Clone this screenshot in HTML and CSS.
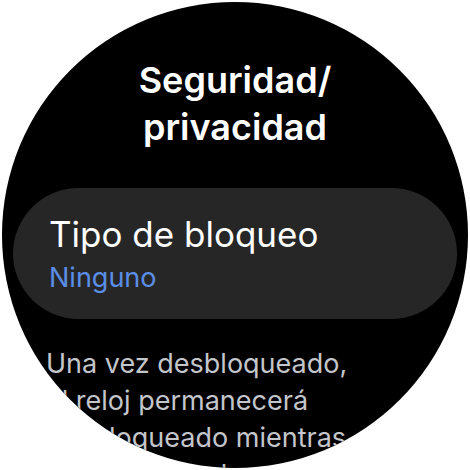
FILE: index.html
```html
<!DOCTYPE html>
<html lang="es">
<head>
<meta charset="utf-8">
<title>Seguridad/privacidad</title>
<link rel="stylesheet" href="styles.css">
</head>
<body>
<div class="watch">
  <h1 class="title">Seguridad/<br>privacidad</h1>
  <div class="card">
    <div class="card-title">Tipo de bloqueo</div>
    <div class="card-sub">Ninguno</div>
  </div>
  <p class="desc">Una vez desbloqueado, el reloj permanecerá desbloqueado mientras lo siga llevando puesto.</p>
</div>
</body>
</html>
```
FILE: styles.css
```css
html, body {
  margin: 0;
  padding: 0;
  background: #ffffff;
}
.watch {
  width: 466px;
  height: 466px;
  margin: 2px;
  border-radius: 50%;
  background: #000000;
  overflow: hidden;
  font-family: Inter, Roboto, sans-serif;
  padding-top: 55px;
  box-sizing: border-box;
}
.title {
  margin: 0;
  color: #ffffff;
  font-size: 36px;
  font-weight: 600;
  line-height: 47px;
  text-align: center;
}
.card {
  margin: 37px 11px 0 11px;
  height: 131px;
  box-sizing: border-box;
  padding: 26px 0 0 36px;
  border-radius: 66px;
  background: #262626;
}
.card-title {
  color: #ffffff;
  font-size: 35px;
  line-height: 40px;
}
.card-sub {
  margin-top: 8px;
  color: #5b8ee6;
  font-size: 27px;
  line-height: 32px;
}
.desc {
  margin: 26px 0 0 44px;
  width: 318px;
  color: #c3c6cb;
  font-size: 27px;
  line-height: 37px;
}
```
